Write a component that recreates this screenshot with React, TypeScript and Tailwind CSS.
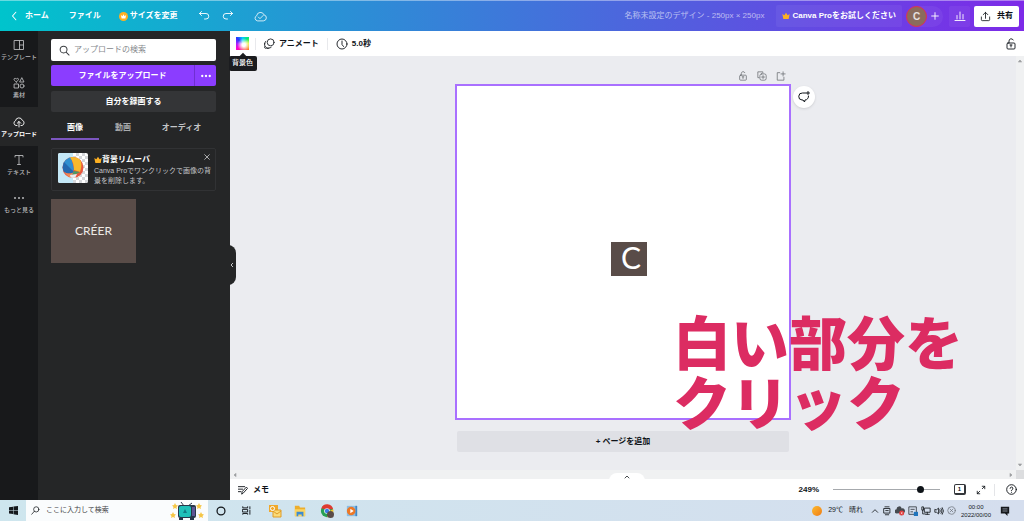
import type { ReactNode } from "react";

type IconProps = { className?: string; children: ReactNode; box?: string; width?: number };

function Icon({ className = "size-3", children, box = "0 0 24 24", width = 1.8 }: IconProps) {
  return (
    <svg
      viewBox={box}
      className={`shrink-0 ${className}`}
      fill="none"
      stroke="currentColor"
      strokeWidth={width}
      strokeLinecap="round"
      strokeLinejoin="round"
      aria-hidden="true"
    >
      {children}
    </svg>
  );
}

function CrownCoin() {
  return (
    <svg viewBox="0 0 24 24" className="size-[9px] shrink-0" aria-hidden="true">
      <circle cx="12" cy="12" r="12" fill="#fdb022" />
      <path d="M5 8l4 3 3-5 3 5 4-3-2 9H7z" fill="#fff" />
    </svg>
  );
}

function Crown() {
  return (
    <svg viewBox="0 0 24 24" className="size-2 shrink-0" aria-hidden="true">
      <path d="M1 6l6 4 5-8 5 8 6-4-3 15H4z" fill="#fdb022" />
    </svg>
  );
}

function LockIcon({ className }: { className: string }) {
  return (
    <Icon className={className}>
      <rect x="4" y="10" width="16" height="12" rx="2" />
      <path d="M8 10V6a4.500 4.500 0 0 1 8.500-2M12 14v4M10 14h4" />
    </Icon>
  );
}

function Header() {
  return (
    <header className="flex h-[31px] shrink-0 items-center border-t border-white/40 bg-linear-to-r/srgb from-[#00c4cc] to-[#7d2ae8] pr-[5px] pl-2.5 text-[8px] font-bold text-white">
      <button className="flex items-center gap-[5px]">
        <Icon className="size-2.5" width={2.5}>
          <path d="M14 3l-8 9 8 9" />
        </Icon>
        ホーム
      </button>
      <button className="ml-5">ファイル</button>
      <button className="ml-[18px] flex items-center gap-0.5">
        <CrownCoin />
        サイズを変更
      </button>
      <button className="ml-5" aria-label="元に戻す">
        <Icon>
          <path d="M7 3L3 7l4 4M3 7h13a5 5 0 0 1 0 11h-3" />
        </Icon>
      </button>
      <button className="ml-3" aria-label="やり直す">
        <Icon>
          <path d="M17 3l4 4-4 4M21 7H8a5 5 0 0 0 0 11h3" />
        </Icon>
      </button>
      <button className="ml-5 text-white/80" aria-label="保存済み">
        <Icon className="size-[13px]">
          <path d="M6 20a5 5 0 0 1-1-9.500A7 7 0 0 1 18.500 9 5.600 5.600 0 0 1 18 20zM8 13l3 3 6-6" />
        </Icon>
      </button>
      <button className="ml-auto font-normal whitespace-nowrap text-white/60">
        名称未設定のデザイン - 250px × 250px
      </button>
      <button className="ml-3 flex h-[22px] items-center gap-0.5 rounded-xs bg-white/5 px-1.5 text-[8px] whitespace-nowrap">
        <Crown />
        Canva Proをお試しください
      </button>
      <div className="ml-1 flex h-[21px] items-center rounded-full bg-white/5">
        <span className="flex size-[21px] items-center justify-center rounded-full border border-[#e0304f] bg-[#8a6c5c] text-[10px] text-white/80">
          C
        </span>
        <button className="px-[3px]" aria-label="メンバーを追加">
          <Icon className="size-2.5" width={2.200}>
            <path d="M12 4v16M4 12h16" />
          </Icon>
        </button>
      </div>
      <button className="ml-1.5 flex h-[21px] w-[21px] items-center justify-center rounded-xs bg-white/5" aria-label="インサイト">
        <Icon>
          <path d="M2 21h20M6 18v-7M12 18V4M18 18V9" />
        </Icon>
      </button>
      <button className="ml-1 flex h-[21px] w-[45px] items-center justify-center gap-1.5 rounded-xs bg-white text-[#0e1318]">
        <Icon className="size-[11px]">
          <path d="M3 13v6a2 2 0 0 0 2 2h14a2 2 0 0 0 2-2v-6M12 16V3M7 8l5-5 5 5" />
        </Icon>
        共有
      </button>
    </header>
  );
}

const railItems = [
  {
    label: "テンプレート",
    icon: <path d="M3 3h18v18H3zM13 3v18M13 12h8" />,
  },
  {
    label: "素材",
    icon: <path d="M6.500 10C4 8 2 6.500 2 4.500 2 2.500 5 2 6.500 4 8 2 11 2.500 11 4.500 11 6.500 9 8 6.500 10zM18 2l4 8h-8zM3 14h8v8H3zM22 18a4 4 0 1 1-8 0 4 4 0 0 1 8 0z" />,
  },
  {
    label: "アップロード",
    icon: <path d="M8 19H6a5 5 0 0 1-1-9.500 7 7 0 0 1 13.500-1A5.500 5.500 0 0 1 18 19h-2M12 22V11M8.500 14.500L12 11l3.500 3.500" />,
  },
  {
    label: "テキスト",
    icon: <path d="M4 6V3h16v3M12 3v18M9 21h6" />,
  },
  {
    label: "もっと見る",
    icon: (
      <g fill="currentColor" stroke="none">
        <circle cx="4" cy="12" r="2" />
        <circle cx="12" cy="12" r="2" />
        <circle cx="20" cy="12" r="2" />
      </g>
    ),
  },
];

function Rail() {
  return (
    <nav className="w-[38px] shrink-0 bg-[#18191b]">
      {railItems.map((item) => {
        const active = item.label === "アップロード";
        return (
          <button
            key={item.label}
            className={`flex w-full flex-col items-center justify-center gap-0.5 text-[6px] leading-[8px] whitespace-nowrap ${
              active ? "h-[39px] bg-[#252627] font-bold text-white" : "h-[38px] font-medium text-[#b9babc]"
            }`}
          >
            <Icon className="size-3">{item.icon}</Icon>
            {item.label}
          </button>
        );
      })}
    </nav>
  );
}

function BeachBall() {
  return (
    <svg viewBox="0 0 30 30" className="size-[30px] shrink-0 rounded-xs" aria-hidden="true">
      <defs>
        <pattern id="checks" width="6" height="6" patternUnits="userSpaceOnUse">
          <path d="M0 0h3v3H0zM3 3h3v3H3z" fill="#d5d7da" />
        </pattern>
        <clipPath id="ball">
          <circle cx="15" cy="14.500" r="10.500" />
        </clipPath>
      </defs>
      <path d="M0 0h30v30H0z" fill="#fff" />
      <path d="M15 0h15v30H15z" fill="url(#checks)" />
      <path d="M0 0h15v30H0z" fill="#c4e8f7" />
      <g clipPath="url(#ball)">
        <path d="M4 3h22v23H4z" fill="#e8573f" />
        <path d="M12 3C8 6 5 8 5 10l9 10 2-4C15 11 14 7 12 3z" fill="#2f8fd0" />
        <path d="M5 8c-2 4-1 8 1 11 4 2 7 2 10 0z" fill="#2468b0" />
        <path d="M11 3c4 5 5 9 5 14l6 2c2-6 2-10-1-14-3-2-6-3-10-2z" fill="#f6b92c" />
        <path d="M6 19c4 2 7 2 10 0l-4 6z" fill="#f08a55" />
        <path d="M16 18l6 1-4 2-4 1z" fill="#4b9a63" />
        <path d="M12 22l7-1-2 4-4 1z" fill="#e9ecef" />
      </g>
    </svg>
  );
}

function UploadPanel() {
  return (
    <aside className="relative w-[192px] shrink-0 bg-[#252627] pt-2 pr-3.5 pl-[13px] text-white">
      <label className="flex h-[22px] items-center gap-1 rounded-xs bg-white px-2 text-[#3a3d40]">
        <Icon className="size-[11px]" width={2.200}>
          <circle cx="10" cy="10" r="7.500" />
          <path d="M16 16l6 6" />
        </Icon>
        <input
          type="search"
          aria-label="アップロードの検索"
          placeholder="アップロードの検索"
          className="min-w-0 flex-1 bg-transparent text-[8px] outline-none placeholder:text-[#85888c]"
        />
      </label>
      <div className="mt-1 flex h-[21px] rounded-xs bg-[#8b3dff] text-[8px] font-bold">
        <button className="flex-1">ファイルをアップロード</button>
        <button className="flex w-[22px] items-center justify-center border-l border-[#6f2fd2]" aria-label="その他">
          <Icon className="size-2.5">
            <g fill="currentColor" stroke="none">
              <circle cx="3" cy="12" r="2.800" />
              <circle cx="12" cy="12" r="2.800" />
              <circle cx="21" cy="12" r="2.800" />
            </g>
          </Icon>
        </button>
      </div>
      <button className="mt-[5px] h-[21px] w-full rounded-xs bg-[#343537] text-[8px] font-bold">自分を録画する</button>
      <div role="tablist" className="mt-[5px] flex h-[23px] text-[8px] font-bold">
        <button role="tab" aria-selected="true" className="w-12 border-b-2 border-[#7c56c0]">
          画像
        </button>
        <button role="tab" aria-selected="false" className="w-12 border-b-2 border-transparent text-[#a9abad]">
          動画
        </button>
        <button role="tab" aria-selected="false" className="flex-1 border-b-2 border-transparent text-[#c4c5c7]">
          オーディオ
        </button>
      </div>
      <section className="relative mt-2 flex h-[43px] gap-1.5 rounded-xs border border-[#313234] px-1.5 pt-1">
        <BeachBall />
        <div className="whitespace-nowrap">
          <h2 className="flex items-center text-[8px] leading-[13px] font-bold">
            <Crown />
            背景リムーバ
          </h2>
          <p className="text-[7px] leading-[10px] text-[#c4c5c7]">
            Canva Proでワンクリックで画像の背
            <br />
            景を削除します。
          </p>
        </div>
        <button className="absolute top-1 right-1 text-[#c4c5c7]" aria-label="閉じる">
          <Icon className="size-2" width={2.500}>
            <path d="M5 5l14 14M19 5L5 19" />
          </Icon>
        </button>
      </section>
      <button className="mt-2 flex h-16 w-[85px] items-center justify-center bg-[#594c48] font-['Lato'] text-[12px] text-[#ece8e5]">
        CRÉER
      </button>
      <button
        className="absolute top-[214px] -right-1.5 z-10 flex h-10 w-3 items-center justify-center rounded-r-lg bg-[#252627] pl-1"
        aria-label="パネルを閉じる"
      >
        <Icon className="size-1.5" width={3}>
          <path d="M15 5l-7 7 7 7" />
        </Icon>
      </button>
    </aside>
  );
}

function Toolbar() {
  return (
    <div className="flex h-[25px] shrink-0 items-center bg-white pr-[7px] pl-1.5 text-[8px] font-bold">
      <div className="relative">
        <button
          className="block size-[13px] bg-[radial-gradient(circle_at_60%_60%,#fff_15%,transparent_60%),conic-gradient(#00c8ff,#00e878_45deg,#e0f000_90deg,#ff7a20_135deg,#ff2060_180deg,#ff00d0_225deg,#a020ff_270deg,#2838ff_315deg,#00c8ff)]"
          aria-label="背景色"
        />
        <div
          role="tooltip"
          className="absolute top-[19px] left-1/2 z-20 flex h-[15px] w-7 -translate-x-1/2 items-center justify-center rounded-xs bg-[#1b1c1f] text-[7px] font-medium text-white"
        >
          <span className="absolute -top-0.5 size-1.5 rotate-45 bg-[#1b1c1f]" />
          <span className="relative">背景色</span>
        </div>
      </div>
      <span className="ml-1.5 h-3 w-px bg-[#e8e9ec]" />
      <button className="ml-2 flex items-center gap-1">
        <Icon className="size-[11px]">
          <circle cx="14.500" cy="9.500" r="7.500" />
          <path d="M4 7a8 8 0 0 0 12 13M2 11a7 7 0 0 0 9 11" />
        </Icon>
        アニメート
      </button>
      <span className="ml-2 h-3 w-px bg-[#e8e9ec]" />
      <button className="ml-2 flex items-center gap-1">
        <Icon>
          <circle cx="12" cy="12" r="10" />
          <path d="M12 6v7l3 4" />
        </Icon>
        5.0秒
      </button>
      <button className="ml-auto" aria-label="ロック">
        <LockIcon className="size-3" />
      </button>
    </div>
  );
}

function Workspace() {
  return (
    <div className="flex min-h-0 flex-1 bg-[#ebecf0]">
      <div className="flex min-w-0 flex-1 justify-center pt-3.5">
        <div className="relative w-[336px]">
          <div className="flex h-3.5 items-start justify-end gap-[9px] pt-px pr-[5px] text-[#686b70]">
            <button aria-label="ページをロック">
              <LockIcon className="size-2.5" />
            </button>
            <button aria-label="ページを複製">
              <Icon className="size-2.5">
                <path d="M5 16H2V2h12v3" />
                <rect x="7" y="7" width="15" height="15" rx="4" />
                <path d="M14.500 11v7M11 14.500h7" />
              </Icon>
            </button>
            <button aria-label="ページを追加">
              <Icon className="size-2.5">
                <path d="M9 4H3v18h16v-7M17 2v10M12 7h10" />
              </Icon>
            </button>
          </div>
          <div className="flex aspect-square w-full items-center justify-center border-2 border-[#a970ff] bg-white pt-3.5 pl-3">
            <div className="flex h-[34px] w-9 items-center justify-center bg-[#594c48] pb-1 pl-1 font-['Lato'] text-[30px] leading-none text-white">
              C
            </div>
          </div>
          <button className="mt-[11px] ml-0.5 h-[21px] w-[332px] rounded-xs bg-[#dfe0e5] text-[8px] font-bold">
            + ページを追加
          </button>
          <button
            className="absolute top-4 left-[338px] flex size-[22px] items-center justify-center rounded-full bg-white shadow-sm"
            aria-label="コメント"
          >
            <Icon className="size-3" width={2}>
              <path d="M16 4H9a7 7 0 0 0-1 14h2l3 4 1-4a7 7 0 0 0 7-8M20 1v6M17 4h6" />
            </Icon>
          </button>
          <p className="pointer-events-none absolute top-[245px] left-[218px] z-10 text-[58px] leading-[60px] font-black whitespace-nowrap text-[#dc2c62]">
            白い部分を
            <br />
            クリック
          </p>
        </div>
      </div>
      <div className="flex w-2 shrink-0 flex-col items-center justify-between bg-[#f0f1f2] py-0.5 text-[#8b8d90]">
        <Icon className="size-1.5">
          <path d="M6 15l6-7 6 7z" fill="currentColor" />
        </Icon>
        <Icon className="size-1.5">
          <path d="M6 9l6 7 6-7z" fill="currentColor" />
        </Icon>
      </div>
    </div>
  );
}

function Footer() {
  return (
    <footer className="relative flex h-[21px] shrink-0 items-center bg-white pr-[7px] pl-2 text-[8px] font-bold">
      <button
        className="absolute -top-1.5 left-1/2 flex h-2 w-9 -translate-x-1/2 items-center justify-center rounded-t-lg bg-white"
        aria-label="ページ一覧を表示"
      >
        <Icon className="size-1.5" width={3}>
          <path d="M4 16l8-8 8 8" />
        </Icon>
      </button>
      <button className="flex items-center gap-[5px]">
        <Icon className="size-2.5" width={2.200}>
          <path d="M1 4h15M1 10h10M1 16h6M9 21l1-5L20 5l3 3-10 11z" />
        </Icon>
        メモ
      </button>
      <label htmlFor="zoom" className="ml-auto">
        249%
      </label>
      <input
        id="zoom"
        type="range"
        min={0}
        max={100}
        defaultValue={84}
        className="ml-3.5 h-2 w-[107px] appearance-none bg-transparent [&::-webkit-slider-runnable-track]:h-px [&::-webkit-slider-runnable-track]:bg-[#a6a9ad] [&::-webkit-slider-thumb]:-mt-[3px] [&::-webkit-slider-thumb]:size-[7px] [&::-webkit-slider-thumb]:appearance-none [&::-webkit-slider-thumb]:rounded-full [&::-webkit-slider-thumb]:bg-[#0e1318]"
      />
      <button
        className="ml-3.5 flex h-[11px] w-3 items-center justify-center rounded-xs border border-r-2 border-b-2 border-[#33363a] text-[6px] leading-none"
        aria-label="1ページ"
      >
        1
      </button>
      <button className="ml-2.5" aria-label="全画面表示">
        <Icon className="size-2.5" width={2}>
          <path d="M15 3h6v6M21 3l-6 6M9 21H3v-6M3 21l6-6" />
        </Icon>
      </button>
      <span className="ml-2 h-3 w-px bg-[#e4e5e8]" />
      <button className="ml-[11px]" aria-label="ヘルプ">
        <Icon className="size-[11px]" width={2}>
          <circle cx="12" cy="12" r="10.500" />
          <path d="M9 9.500a3 3 0 1 1 4 3c-1 .5-1 1-1 2M12 18v.2" />
        </Icon>
      </button>
    </footer>
  );
}

function Television() {
  return (
    <svg viewBox="0 0 34 18" className="h-[18px] w-[34px] shrink-0" aria-hidden="true">
      <path d="M14 4L11 0M18 4l4-3" stroke="#2d3a4d" />
      <rect x="8" y="3" width="18" height="13" rx="2" fill="#27374a" />
      <rect x="9" y="4" width="12" height="11" rx="2" fill="#20c0b9" />
      <path d="M22 5h3v9h-3z" fill="#5d5696" />
      <path d="M15 7l2 4h-4z" fill="#137b86" />
      <path d="M9 16h4v2H9zM20 16h4v2h-4z" fill="#27374a" />
      <g fill="#f5c647">
        <path d="M5 1l1 2 2 .5L6.500 5 7 7 5 6 3 7l.5-2L2 3.500 4 3z" />
        <path d="M29 1l1 2 2 .5L30.500 5l.5 2-2-1-2 1 .5-2L26 3.500l2-.5z" />
        <path d="M3 10l1 2 2 .5L4.500 14l.5 2-2-1-2 1 .5-2L0 12.500 2 12z" />
        <path d="M31 10l1 2 2 .5-1.500 1.500.5 2-2-1-2 1 .5-2-1.500-1.500 2-.5z" />
      </g>
    </svg>
  );
}

function Taskbar() {
  return (
    <div className="flex h-[21px] shrink-0 items-center bg-linear-to-r from-[#cee6ee] to-[#d5deee] text-[#14181c]">
      <button className="flex w-[26px] justify-center" aria-label="スタート">
        <svg viewBox="0 0 20 20" className="size-[9px]" aria-hidden="true">
          <path d="M0 3l9-1.500V9H0zM10 1.300L20 0v9H10zM0 10h9v7.700L0 16.500zM10 10h10v10l-10-1.500z" fill="currentColor" />
        </svg>
      </button>
      <label className="flex h-full w-[182px] items-center gap-1.5 bg-[#fafcfd] pr-1 pl-[5px]">
        <Icon className="size-[9px]" width={2}>
          <circle cx="14" cy="9" r="7" />
          <path d="M9 14l-7 8" />
        </Icon>
        <input
          type="search"
          aria-label="ここに入力して検索"
          placeholder="ここに入力して検索"
          className="min-w-0 flex-1 bg-transparent text-[7px] outline-none placeholder:text-[#3d4144]"
        />
        <Television />
      </label>
      <button className="ml-2" aria-label="Cortana">
        <Icon className="size-2.5" width={3}>
          <circle cx="12" cy="12" r="9.500" />
        </Icon>
      </button>
      <button className="ml-4" aria-label="タスクビュー">
        <Icon className="size-[9px]" width={2.500}>
          <path d="M2 2v3h13V2M2 9h13v7H2zM2 22v-2h13v2M21 2v5M21 11v11" />
        </Icon>
      </button>
      <button className="ml-[17px]" aria-label="Outlook">
        <svg viewBox="0 0 14 14" className="size-3.5" aria-hidden="true">
          <path d="M1 1h9v7H1z" fill="#f0a92c" />
          <path d="M5 6h8v7H5z" fill="#fbdb78" stroke="#df9b27" />
          <path d="M5 7l4 3 4-3" fill="none" stroke="#df9b27" />
          <circle cx="4.500" cy="4.500" r="2" fill="none" stroke="#fff" />
        </svg>
      </button>
      <button className="ml-3" aria-label="エクスプローラー">
        <svg viewBox="0 0 14 14" className="size-3" aria-hidden="true">
          <path d="M1 1h5l1 2h6v10H1z" fill="#edae2c" />
          <path d="M1 5h12v8H1z" fill="#fbd562" />
          <path d="M3 8h8v5H9v-2H5v2H3z" fill="#3c8bd0" />
        </svg>
      </button>
      <button className="ml-3.5" aria-label="Chrome">
        <svg viewBox="0 0 16 16" className="size-3.5" aria-hidden="true">
          <circle cx="8" cy="8" r="7" fill="#28a055" />
          <path d="M1.500 5A7 7 0 0 1 15 6H8z" fill="#df3b31" />
          <path d="M15 6a7 7 0 0 1-7 9l3-7z" fill="#f7c72c" />
          <circle cx="8" cy="8" r="3.200" fill="#fff" />
          <circle cx="8" cy="8" r="2.500" fill="#3c7ce8" />
          <circle cx="12" cy="12" r="4" fill="#594c48" />
        </svg>
      </button>
      <button className="ml-3" aria-label="メディアプレーヤー">
        <svg viewBox="0 0 14 14" className="size-3" aria-hidden="true">
          <path d="M1 1h12v12H1z" fill="#8abde4" />
          <path d="M11 1h2v12h-2z" fill="#4287c4" />
          <circle cx="6" cy="7" r="5" fill="#ed7826" />
          <path d="M5 4.500l4 2.500-4 2.500z" fill="#fff" />
        </svg>
      </button>
      <button className="ml-auto flex items-center gap-1.5 text-[7px] whitespace-nowrap">
        <span className="size-2.5 rounded-full bg-linear-to-br from-[#fcba2d] to-[#ee7b16]" />
        <span>29℃</span>
        <span>晴れ</span>
      </button>
      <div className="ml-2 flex items-center gap-[3px]">
        <Icon className="size-2" width={2.500}>
          <path d="M4 16l8-8 8 8" />
        </Icon>
        <Icon className="size-2.5" width={2}>
          <path d="M7 2h10M5 6h14v11H5zM8 21h8M9 11h6" />
        </Icon>
        <svg viewBox="0 0 12 12" className="size-2.5" aria-hidden="true">
          <path d="M2 9a2.500 2.500 0 0 1 0-5 3 3 0 0 1 6-1 3 3 0 0 1 3 5z" fill="#454a50" />
          <circle cx="8" cy="8.500" r="3" fill="#de3c3c" />
          <path d="M7 7.500l2 2m0-2l-2 2" stroke="#fff" strokeWidth=".8" />
        </svg>
        <svg viewBox="0 0 12 12" className="size-2.5" aria-hidden="true">
          <path d="M1 1h9v9H1zM3 4h5M3 7h3" fill="none" stroke="#31373e" />
          <path d="M7 7h5v5H7z" fill="#2175bd" />
        </svg>
        <Icon className="size-2.5" width={2}>
          <path d="M2 3v7h4V3zM4 10v9h6M9 5h13v10H9zM15 15v5M11 20h9" />
        </Icon>
        <Icon className="size-2.5" width={2}>
          <path d="M2 9v6h4l5 4V5L6 9zM14 9q3 3 0 6M17 6q5 6 0 12M20 4q6 8 0 16" />
        </Icon>
        <Icon className="size-[9px] text-[#70767d]" width={2}>
          <circle cx="12" cy="12" r="10" />
          <path d="M8 8l8 8M16 8l-8 8" />
        </Icon>
      </div>
      <time className="ml-1 flex w-8 flex-col items-center text-[6px] leading-[8px] font-medium">
        <span>00:00</span>
        <span>2022/00/00</span>
      </time>
      <button className="mr-3.5 ml-2" aria-label="通知">
        <svg viewBox="0 0 12 12" className="size-2.5" aria-hidden="true">
          <path d="M1 1h10v8H9v3L6 9H1z" fill="#16191c" />
          <path d="M3 3.500h6M3 6h6" stroke="#d5deee" strokeWidth=".7" />
        </svg>
      </button>
    </div>
  );
}

export default function App() {
  return (
    <div className="flex h-screen flex-col overflow-hidden font-['Liberation_Sans','Noto_Sans_CJK_JP',sans-serif] text-[#0e1318]">
      <Header />
      <div className="flex min-h-0 flex-1">
        <Rail />
        <UploadPanel />
        <main className="flex min-w-0 flex-1 flex-col">
          <Toolbar />
          <Workspace />
          <div className="flex h-[9px] shrink-0 items-center justify-between bg-[#f0f1f2] pl-0.5 text-[#8b8d90]">
            <Icon className="size-1.5">
              <path d="M15 6l-7 6 7 6z" fill="currentColor" />
            </Icon>
            <div className="flex h-full items-center gap-0.5">
              <Icon className="size-1.5">
                <path d="M9 6l7 6-7 6z" fill="currentColor" />
              </Icon>
              <span className="h-full w-2 bg-[#dcdddf]" />
            </div>
          </div>
          <Footer />
        </main>
      </div>
      <Taskbar />
    </div>
  );
}
